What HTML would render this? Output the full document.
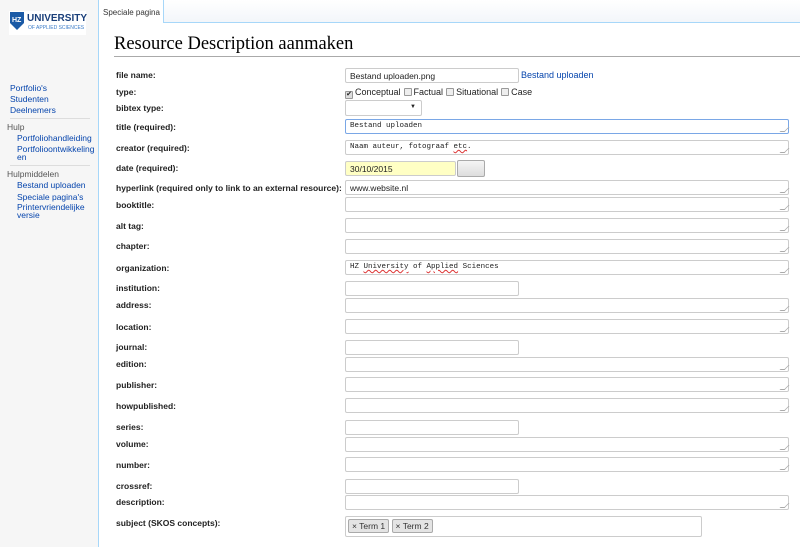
<!DOCTYPE html>
<html><head><meta charset="utf-8"><style>
*{box-sizing:border-box;margin:0;padding:0}
body{width:800px;height:547px;overflow:hidden;background:#fff;font-family:"Liberation Sans",Arial,sans-serif;position:relative}
#side{position:absolute;left:0;top:0;width:99px;height:547px;background:#f6f6f6;border-right:1px solid #a7d7f9}
#side a,#side div{position:absolute;font-size:8.5px;white-space:nowrap}
.l{color:#0645ad;text-decoration:none}
.h{color:#555}
.sep{height:1px;width:80px;background:#ddd;left:10px}
#tabbar{position:absolute;left:100px;top:0;width:700px;height:23px;background:linear-gradient(#fff,#f3f6fa);border-bottom:1px solid #a7d7f9}
#tab{position:absolute;left:100px;top:0;width:64px;height:23px;background:#fff;border-right:1px solid #a7d7f9;font-size:8px;color:#333;padding:8px 0 0 3px;white-space:nowrap}
h1{position:absolute;left:114px;top:34px;font-family:"Liberation Serif",Georgia,serif;font-weight:normal;font-size:18.5px;color:#000;white-space:nowrap}
#hr{position:absolute;left:114px;top:56px;width:686px;height:1px;background:#aaa}
.lb{position:absolute;left:116px;font-size:8.5px;font-weight:bold;color:#222;white-space:nowrap}
.in{position:absolute;left:345px;border:1px solid #ccc;border-radius:2px;background:#fff;height:15px;font-size:8.5px;padding:2px 4px;color:#222;white-space:nowrap}
.ta{width:444px}
.ta:after{content:"";position:absolute;right:1px;bottom:1px;width:4px;height:4px;border-right:1px solid #aaa;border-bottom:1px solid #aaa;transform:skewX(-45deg)}
.mono{font-family:"Liberation Mono",monospace;font-size:7.5px}
.sh{width:174px}
.cb{display:inline-block;width:8px;height:8px;border:1px solid #999;background:#eee;vertical-align:-1px;margin:0 2px 0 3px;border-radius:1px}
.u{text-decoration:underline wavy #d33;text-decoration-thickness:1px}
</style></head><body>
<div id="side">
<div style="left:9px;top:11px;width:77px;height:24px;background:#fff"></div>
<svg style="position:absolute;left:10px;top:12px" width="14" height="18" viewBox="0 0 14 18"><path d="M0 0H14V11L7 18L0 11Z" fill="#1a5aa6"/><text x="2" y="10" font-size="7" font-weight="bold" fill="#fff" font-family="Liberation Sans">HZ</text></svg>
<div style="left:27px;top:13px;font-size:10px;font-weight:bold;color:#1a3f7a">UNIVERSITY</div>
<div style="left:28px;top:25px;font-size:5px;color:#3a7bc8">OF APPLIED SCIENCES</div>
<a class="l" style="left:10px;top:83px">Portfolio's</a>
<a class="l" style="left:10px;top:94px">Studenten</a>
<a class="l" style="left:10px;top:105px">Deelnemers</a>
<div class="sep" style="top:118px"></div>
<div class="h" style="left:7px;top:122px">Hulp</div>
<a class="l" style="left:17px;top:133px">Portfoliohandleiding</a>
<a class="l" style="left:17px;top:145px;line-height:8px">Portfolioontwikkeling<br>en</a>
<div class="sep" style="top:165px"></div>
<div class="h" style="left:7px;top:169px">Hulpmiddelen</div>
<a class="l" style="left:17px;top:180px">Bestand uploaden</a>
<a class="l" style="left:17px;top:192px">Speciale pagina's</a>
<a class="l" style="left:17px;top:203px;line-height:8px">Printervriendelijke<br>versie</a>
</div>
<div id="tabbar"></div>
<div id="tab">Speciale pagina</div>
<h1>Resource Description aanmaken</h1>
<div id="hr"></div>

<div class="lb" style="top:70px">file name:</div>
<div class="in sh" style="top:68px">Bestand uploaden.png</div>
<a class="l" style="position:absolute;left:521px;top:70px;font-size:9px">Bestand uploaden</a>
<div class="lb" style="top:87px">type:</div>
<div style="position:absolute;left:342px;top:87px;font-size:9px;color:#222;white-space:nowrap"><span class="cb" style="background:#ddd;font-size:7px;line-height:6px;text-align:center">✔</span>Conceptual<span class="cb"></span>Factual<span class="cb"></span>Situational<span class="cb"></span>Case</div>
<div class="lb" style="top:103px">bibtex type:</div>
<div class="in" style="top:100px;width:77px;height:16px"><span style="position:absolute;right:5px;top:3px;font-size:6px">▼</span></div>
<div class="lb" style="top:122px">title (required):</div>
<div class="in ta mono" style="top:119px;border-color:#7aa7e6">Bestand uploaden</div>
<div class="lb" style="top:143px">creator (required):</div>
<div class="in ta mono" style="top:140px">Naam auteur, fotograaf <span class="u">etc</span>.</div>
<div class="lb" style="top:163px">date (required):</div>
<div class="in" style="top:161px;width:111px;background:#ffffc4">30/10/2015</div>
<div style="position:absolute;left:457px;top:160px;width:28px;height:17px;border:1px solid #aaa;background:linear-gradient(#f5f5f5,#ddd);border-radius:2px"></div>
<div class="lb" style="top:183px">hyperlink (required only to link to an external resource):</div>
<div class="in ta" style="top:180px">www.website.nl</div>
<div class="lb" style="top:200px">booktitle:</div><div class="in ta" style="top:197px"></div>
<div class="lb" style="top:221px">alt tag:</div><div class="in ta" style="top:218px"></div>
<div class="lb" style="top:241px">chapter:</div><div class="in ta" style="top:239px"></div>
<div class="lb" style="top:263px">organization:</div><div class="in ta mono" style="top:260px">HZ <span class="u">University</span> of <span class="u">Applied</span> Sciences</div>
<div class="lb" style="top:283px">institution:</div><div class="in sh" style="top:281px"></div>
<div class="lb" style="top:300px">address:</div><div class="in ta" style="top:298px"></div>
<div class="lb" style="top:322px">location:</div><div class="in ta" style="top:319px"></div>
<div class="lb" style="top:342px">journal:</div><div class="in sh" style="top:340px"></div>
<div class="lb" style="top:359px">edition:</div><div class="in ta" style="top:357px"></div>
<div class="lb" style="top:380px">publisher:</div><div class="in ta" style="top:377px"></div>
<div class="lb" style="top:401px">howpublished:</div><div class="in ta" style="top:398px"></div>
<div class="lb" style="top:422px">series:</div><div class="in sh" style="top:420px"></div>
<div class="lb" style="top:439px">volume:</div><div class="in ta" style="top:437px"></div>
<div class="lb" style="top:460px">number:</div><div class="in ta" style="top:457px"></div>
<div class="lb" style="top:481px">crossref:</div><div class="in sh" style="top:479px"></div>
<div class="lb" style="top:497px">description:</div><div class="in ta" style="top:495px"></div>
<div class="lb" style="top:518px">subject (SKOS concepts):</div>
<div class="in" style="top:516px;width:357px;height:21px;padding:2px">
<span style="display:inline-block;border:1px solid #aaa;background:#e4e4e4;border-radius:2px;font-size:8.5px;padding:1px 3px;color:#333">× Term 1</span>
<span style="display:inline-block;border:1px solid #aaa;background:#e4e4e4;border-radius:2px;font-size:8.5px;padding:1px 3px;color:#333">× Term 2</span>
</div>
</body></html>
